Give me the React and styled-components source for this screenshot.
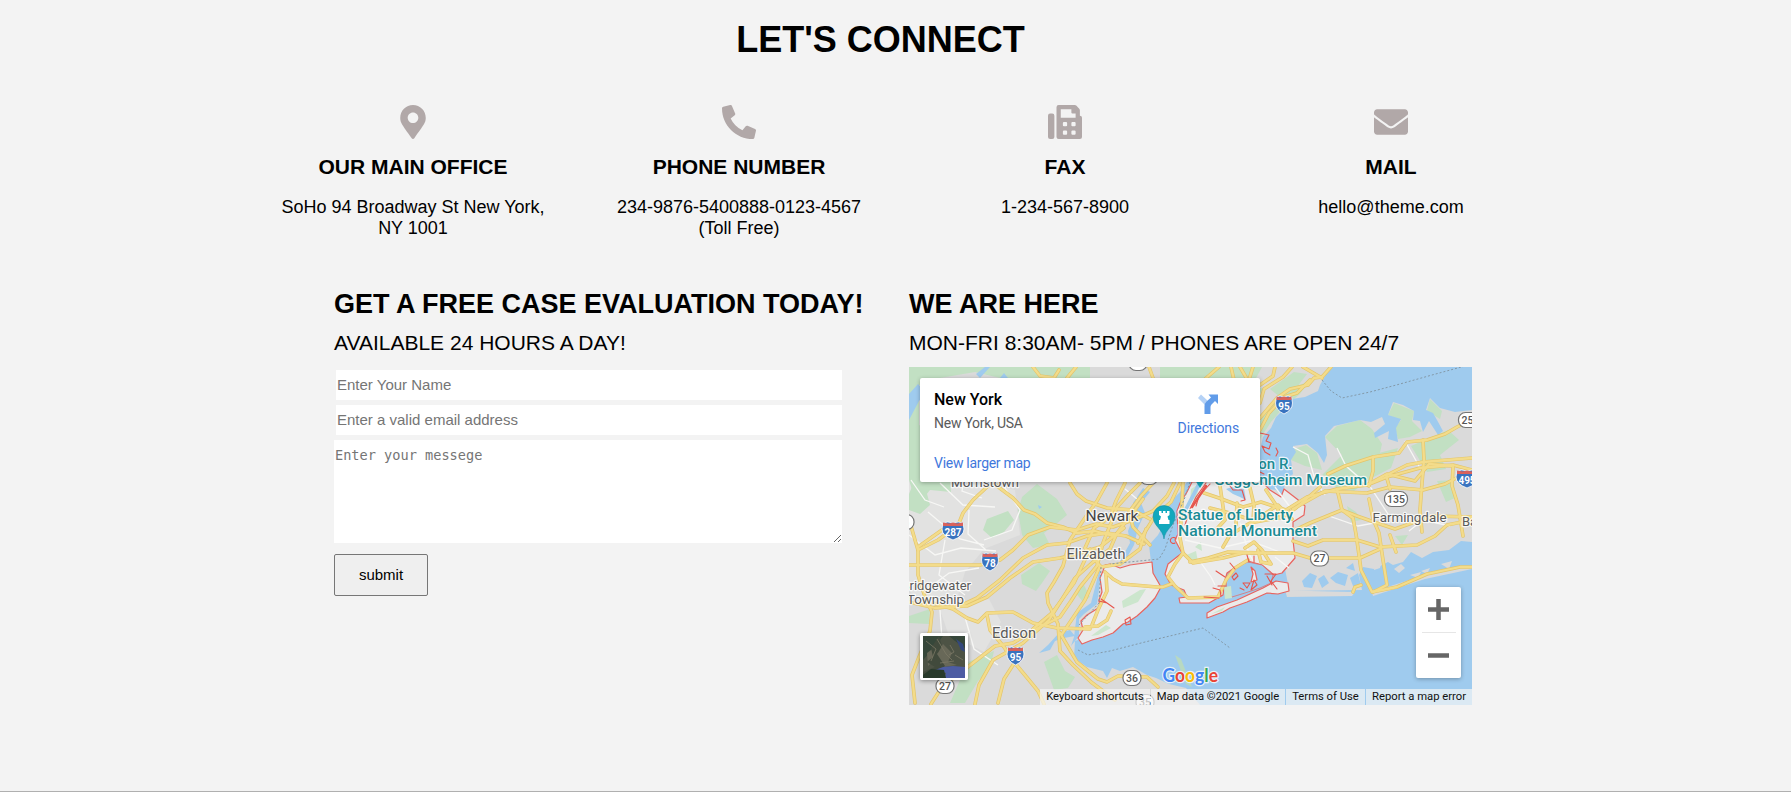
import React from "react";
import styled, { createGlobalStyle } from "styled-components";
import { FaMapMarkerAlt, FaPhoneAlt, FaFax, FaEnvelope } from "react-icons/fa";

const GlobalStyle = createGlobalStyle`
  *, *::before, *::after { box-sizing: border-box; }
  body {
    margin: 0;
    background: #f3f3f3;
    color: #000;
    font-family: "Liberation Sans", Arial, sans-serif;
  }
`;

const Page = styled.main`
  height: 792px;
  overflow: hidden;
  border-bottom: 1px solid #b0b0b0;
`;

const Title = styled.h1`
  width: 1261px;
  margin: 0 0 0 250px;
  padding-top: 19px;
  font-size: 36px;
  line-height: 41px;
  text-align: center;
`;

const Contacts = styled.section`
  display: grid;
  grid-template-columns: repeat(4, 1fr);
  width: 1304px;
  height: 182px;
  margin: 45px 0 0 250px;
`;

const Contact = styled.article`
  display: flex;
  flex-direction: column;
  align-items: center;
  padding: 0 29px;
  text-align: center;

  svg {
    width: 34px;
    height: 34px;
    color: #b1a8a8;
  }
`;

const ContactTitle = styled.h4`
  margin: 16px 0 18px;
  font-size: 21px;
  line-height: 24px;
`;

const ContactText = styled.p`
  margin: 0;
  font-size: 18px;
  line-height: 21px;
`;

const Columns = styled.section`
  display: grid;
  grid-template-columns: 575px 563px;
  padding-left: 334px;
`;

const Heading = styled.h2`
  margin: 2px 0 12px;
  font-size: 27px;
  line-height: 30px;
  white-space: nowrap;
`;

const Subheading = styled.p`
  margin: 0 0 12px;
  font-size: 21px;
  line-height: 24px;
`;

const Form = styled.form`
  display: flex;
  flex-direction: column;
  align-items: flex-start;
  gap: 5px;
  padding-top: 3px;
`;

const Input = styled.input`
  width: 506px;
  height: 30px;
  margin-left: 2px;
  padding: 0 1px 1px;
  border: 0;
  background: #fff;
  font: 15px "Liberation Sans", Arial, sans-serif;
  &::placeholder { color: #757575; }
`;

const Message = styled.textarea`
  display: block;
  width: 508px;
  height: 103px;
  padding: 7px 1px;
  border: 0;
  background: #fff;
  font: 13.6px "DejaVu Sans Mono", monospace;
  &::placeholder { color: #757575; }
`;

const Submit = styled.button`
  width: 94px;
  height: 42px;
  margin-top: 6px;
  padding: 0 0 2px;
  border: 1px solid #767676;
  border-radius: 2px;
  background: #efefef;
  color: #000;
  font: 15px "Liberation Sans", Arial, sans-serif;
`;

const MapFrame = styled.div`
  position: relative;
  width: 563px;
  height: 338px;
  overflow: hidden;
  font-family: Roboto, sans-serif;
`;

const MapCanvas = styled.svg`
  display: block;
  width: 100%;
  height: 100%;
`;

const PlaceCard = styled.div`
  position: absolute;
  top: 11px;
  left: 11px;
  display: flex;
  justify-content: space-between;
  width: 340px;
  height: 104px;
  padding: 12px 21px 0 14px;
  border-radius: 2px;
  background: #fff;
  box-shadow: 0 1px 4px rgba(0, 0, 0, 0.3);
`;

const PlaceName = styled.div`
  font-size: 16px;
  font-weight: 500;
  line-height: 19px;
`;

const PlaceAddress = styled.div`
  margin-top: 6px;
  color: #5b5b5b;
  font-size: 14px;
  letter-spacing: -0.25px;
  line-height: 16px;
`;

const MapLink = styled.a`
  display: block;
  margin-top: ${(p) => p.$top}px;
  color: #3f78dc;
  font-size: 14px;
  letter-spacing: ${(p) => p.$tracking}px;
  line-height: 16px;
`;

const Directions = styled.div`
  display: flex;
  flex-direction: column;
  align-items: center;
  padding-top: 4px;
`;

const ZoomControl = styled.div`
  position: absolute;
  top: 220px;
  right: 11px;
  display: flex;
  flex-direction: column;
  align-items: center;
  width: 45px;
  height: 91px;
  border-radius: 2px;
  background: #fff;
  box-shadow: 0 1px 4px rgba(0, 0, 0, 0.3);
`;

const ZoomButton = styled.button`
  display: flex;
  align-items: center;
  justify-content: center;
  width: 34px;
  height: 45px;
  padding: 0;
  border: 0;
  background: none;
  & + & { border-top: 1px solid #e6e6e6; }
`;

const SatelliteToggle = styled.div`
  position: absolute;
  left: 11px;
  top: 266px;
  width: 48px;
  height: 47px;
  border: 3px solid #fff;
  border-radius: 2px;
  box-shadow: 0 1px 4px rgba(0, 0, 0, 0.4);
  svg { display: block; }
`;

const Attribution = styled.div`
  position: absolute;
  right: 0;
  bottom: 0;
  display: flex;
  height: 16px;
  color: #111;
  font-size: 11.25px;
  line-height: 16px;
`;

const Credit = styled.span`
  width: ${(p) => p.$width}px;
  background: rgba(245, 245, 245, 0.7);
  text-align: center;
  white-space: nowrap;
  & + & { margin-left: 1px; }
`;

const water = [
  "M1328 367L1325 376 1320 385 1318 391 1305 397 1292 399 1285 408 1276 417 1271 428 1263 437 1260 450V488L1276 490 1283 497 1285 482 1293 474 1291 460 1296 452 1293 446 1307 444 1318 453 1324 463 1327 455 1325 436 1334 426 1343 424 1360 420 1371 422 1382 417 1385 424 1374 433 1375 438 1389 431 1388 439 1398 442 1396 428 1401 419 1388 415 1393 402 1403 405 1414 411 1413 420 1420 421 1423 432 1429 421 1438 435 1443 431 1437 420 1433 413 1426 410 1430 398 1440 408 1455 412 1472 410V367Z",
  "M1187 482L1180 492 1172 500 1165 509 1167 518 1158 535 1149 545 1151 562 1149 590 1120 615 1096 634 1075 641 1074 658 1087 667 1103 671 1107 678 1112 668 1120 671 1133 667 1147 675 1156 678 1169 684 1186 688 1200 705H1472V542L1461 541 1449 550 1433 552 1422 558 1411 552 1403 562 1393 565 1388 562 1374 569 1363 567 1359 575 1345 574 1335 580 1325 588 1317 574 1307 577 1302 584 1289 589 1285 569 1260 559 1230 566 1208 590 1190 570 1190 500 1195 482Z",
  "M1143 488L1150 492 1141 503 1145 513 1138 528 1134 545 1125 561 1120 561 1130 543 1128 531 1134 515 1133 503Z",
  "M1100 568L1100 582 1097 604 1084 614 1079 619 1079 636 1071 646 1074 637 1077 613 1091 603Z",
  "M1075 636L1064 638 1055 641 1050 650 1039 653 1048 645 1059 633 1070 630Z",
];

const parks = [
  "M909 367H1090L1090 378 1000 378 975 372 940 378 919 385V430L909 460Z",
  "M1160 367H1262L1255 380H1160Z",
  "M909 430L920 425V472L932 482 950 480 951 492 930 490 922 500 913 493 909 480Z",
  "M914 482L926 490 930 505 920 514 909 510V494Z",
  "M987 519L1008 511 1014 520 1004 532 992 538 983 530Z",
  "M1022 497L1037 484 1057 499 1067 515 1055 525 1044 533 1050 545 1033 548 1022 535 1018 511Z",
  "M1021 575L1039 563 1050 571 1042 583 1036 591 1022 584Z",
  "M909 616L930 609 929 624 909 623Z",
  "M968 662L994 651 990 669 978 681 965 703H950L960 680Z",
  "M1044 662L1057 655 1065 671 1075 677 1068 688 1054 690Z",
  "M1075 592L1084 585 1090 597 1083 602Z",
  "M1260 421L1275 398 1290 388 1308 382 1300 394 1284 407 1271 422 1260 439Z",
  "M1270 389L1294 372 1307 374 1297 387 1280 397Z",
  "M1294 449L1306 445 1317 453 1322 470 1305 466 1291 460Z",
  "M1325 437L1337 426 1360 420 1372 429 1382 444 1379 457 1361 461 1333 478 1322 475 1342 455Z",
  "M1325 477L1360 458 1398 448 1391 468 1370 479 1354 491 1337 488Z",
  "M1388 415L1394 403 1414 411 1412 421 1422 431 1410 437 1398 439 1395 428 1401 420Z",
  "M1430 399L1442 411 1440 419 1427 411Z",
  "M1411 446L1448 430 1459 440 1440 455 1446 469 1427 472Z",
  "M1437 481L1454 480 1455 498 1446 502Z",
  "M1347 506L1356 512 1361 520 1351 522Z",
  "M1395 536L1408 535 1402 545Z",
  "M1356 601L1370 594 1378 596 1359 601Z",
  "M1250 383L1263 389 1256 400Z",
];

const sandyHook = "M1175 655L1181 659 1192 687 1186 684Z";

const urban = [
  "M909 488L945 475 1015 490 1020 535 984 549 965 572 958 595 925 608 909 590Z",
  "M940 610L989 599 1001 622 984 652 948 633Z",
  "M909 480L935 472 955 485 940 506 909 505Z",
];

const boroughs = [
  "M1105 565L1110 564 1120 568 1130 565 1152 562 1153 573 1161 587 1155 598 1147 607 1137 616 1128 622 1123 624 1113 633 1103 637 1092 640 1082 644 1078 638 1083 630 1081 621 1087 615 1100 607 1099 600 1102 592 1100 578 1103 571Z",
  "M1192 482L1187 492 1180 503 1177 511 1178 534 1175 540 1182 553 1168 564 1165 574 1171 585 1184 590 1187 597 1179 598 1180 603 1209 603 1223 595 1225 580 1227 573 1240 564 1248 561 1262 565 1274 575 1282 573 1295 558 1293 540 1293 522 1304 515 1305 506 1297 499 1284 489 1281 497 1270 490 1260 480Z",
  "M1207 618L1207 613 1217 607 1237 600 1250 594 1263 588 1276 581 1288 583 1289 591 1278 594 1267 593 1247 602 1230 608 1223 612Z",
];

const minor =
  "M911 480L925 500 944 507M928 512L960 539 984 545M945 540L939 575 965 595M969 510L968 534 986 550M940 483L963 505 995 507M909 535L935 555 961 548 996 551M965 475L962 491 982 498M1008 473L1005 488 1020 510 1012 530 984 540M926 590L949 573 979 568M940 610L942 640 970 632M965 617L974 649 998 665M1293 447L1308 455 1315 480 1325 495M1337 448L1346 466 1371 488 1388 514M1240 523L1249 554 1254 562M1199 560L1211 577 1215 585M1405 441L1414 457 1420 468M1329 516L1358 526 1390 520M1409 531L1423 520 1450 526M1275 487L1290 507M1185 540L1220 548 1250 541 1280 552M1275 557L1289 568M1125 489L1137 499";

const roads = [
  "M988 486L973 500 963 513 959 523 942 530 918 547 918 575 925 597 932 612 930 631 919 657 912 675 915 703",
  "M909 565H980L1000 560 1013 550 1028 535 1050 527 1077 530 1096 524 1113 527 1133 520 1153 511 1167 496 1174 483",
  "M909 602L935 608 960 606 977 598 1000 580 1023 558 1047 545 1067 543 1087 536 1107 533 1126 536 1144 544",
  "M948 607L967 606 987 597 1010 578 1033 562 1060 558 1080 553 1100 547 1124 528",
  "M909 519L915 540 918 550 938 540 960 524",
  "M993 483L1013 498 1024 510 1035 514 1047 523 1063 527 1077 533 1095 531 1113 536",
  "M1070 483L1077 494 1086 501 1107 508 1133 510 1150 519",
  "M1140 483L1128 495 1117 507 1111 523 1103 543 1097 566 1080 587 1071 601 1060 617 1040 627 1013 643 995 646 973 663 957 675 940 690 931 704",
  "M1107 483L1097 501 1087 515 1070 540 1063 566 1054 582 1047 593 1048 603 1058 624 1060 651 1073 665 1091 682 1115 700",
  "M933 603L953 609 967 618 978 622 987 613 1013 612 1033 623 1057 628 1090 629",
  "M987 615L990 630 1004 647 1014 662 1029 680 1038 691 1044 704",
  "M1015 662L1004 679 998 703",
  "M975 704L979 685 993 660 1023 643 1049 620 1061 601 1075 578 1093 562 1110 549 1117 533 1132 514 1143 499",
  "M1060 633L1077 662 1098 679 1107 682 1118 676 1147 677 1158 687",
  "M1100 566L1085 600 1062 634",
  "M1090 549L1074 583 1052 613 1033 629",
  "M1125 483L1116 501 1110 517 1094 528 1085 548 1101 567 1120 564 1140 549 1146 529",
  "M1153 483L1141 496 1129 512 1133 527 1150 545",
  "M1180 483L1171 502 1155 516 1138 543",
  "M1033 367L1040 376 1054 378 1059 370M1076 367L1067 378M1149 367L1153 378M1219 367L1205 379M1231 367L1234 380M1240 367L1247 379M1253 367L1248 383",
  "M1260 403L1264 389 1283 377 1292 367",
  "M1260 418L1277 398 1290 389 1308 385 1314 378 1322 377 1331 367",
  "M1260 430L1269 413 1284 397 1297 393 1310 380",
  "M1303 367L1322 378",
  "M1260 385L1273 376 1275 367",
  "M1183 553L1193 563 1223 558 1243 553H1293L1310 558H1360L1380 549",
  "M1183 483L1181 520 1180 538 1183 553 1175 564 1168 577 1175 586 1188 598 1218 597 1226 580 1235 568 1248 560",
  "M1223 547L1230 535 1250 523 1283 517 1296 508 1320 487",
  "M1204 493L1219 498 1243 507 1261 502 1286 510 1307 497 1337 489 1367 485 1387 477 1420 468 1453 465 1472 470",
  "M1210 508L1234 514 1254 521 1278 505 1292 519",
  "M1220 486L1225 520 1213 533M1250 488L1254 505 1253 522M1266 490L1276 505 1281 518M1237 503L1236 525",
  "M1245 548L1254 542 1262 550 1271 564 1261 562 1258 550",
  "M1328 474L1345 466 1373 457 1399 453 1407 442 1427 440 1445 434 1457 427 1467 422 1472 420",
  "M1293 509L1325 491 1345 492 1367 493 1390 487 1423 490 1445 484 1460 476 1472 478",
  "M1367 485L1387 474 1415 481 1429 464 1452 466M1387 475L1407 465 1423 462 1472 458",
  "M1373 457L1373 471 1369 486M1423 440L1424 460 1422 483 1420 510 1422 532M1453 467L1452 486 1458 505 1463 536M1386 475L1390 489",
  "M1337 489L1342 510 1353 518 1356 534 1359 555 1361 570 1372 592 1397 587 1427 574 1460 567H1472",
  "M1369 499L1373 519 1379 533 1383 560 1387 585 1373 592M1353 592L1355 587 1361 585",
  "M1293 541L1308 546 1323 540 1357 540 1380 547 1417 545 1435 536 1447 525 1472 520",
  "M1293 531L1310 523 1342 510 1357 516 1374 522 1395 529 1415 522 1433 516 1472 517",
  "M1190 562L1208 558 1228 552 1265 553M1390 535L1396 552",
  "M1105 572L1113 579 1122 584 1157 587 1163 587 1171 584M1085 627L1098 626 1107 620 1111 611M1106 575L1107 591 1098 610 1092 625",
];

const coastDetail =
  "M1206 483L1196 497 1190 509 1185 525M1210 484L1199 496 1196 506M1228 483L1233 490 1242 490 1245 500 1241 501M1260 433L1269 435 1266 441 1271 443 1269 449 1262 446 1265 452 1270 455M1276 448L1278 452 1276 456M1256 470L1264 474M1176 539A3 3 0 1 0 1175 543M1099 601L1107 603 1114 608M1107 603L1101 599M1125 620L1130 617 1131 624 1126 625ZM1216 571L1225 577M1230 563L1235 569M1213 588L1220 590 1221 596M1218 586L1226 586M1247 555L1249 562M1254 556V562M1265 574L1276 574 1271 581 1277 589M1267 576L1272 585M1240 588L1244 590M1243 583L1250 583 1247 588ZM1254 580L1257 585 1251 590ZM1232 577L1236 573 1238 576 1234 580ZM1204 597L1219 598";

const Shield = ({ x, y, children, w = 20 }) => (
  <g transform={`translate(${x} ${y})`}>
    <path d={`M${-w / 2 + 1} -8Q${-w / 4} -10 0 -8Q${w / 4} -10 ${w / 2 - 1} -8L${w / 2} -2Q${w / 2} 5 0 9Q${-w / 2} 5 ${-w / 2} -2Z`} fill="#3973bf" stroke="#fff" strokeWidth=".8" />
    <path d={`M${-w / 2 + 1} -8.5L-4 -7.5 0 -8.5 4 -7.5 ${w / 2 - 1} -8.5L${w / 2 - 1} -5H${-w / 2 + 1}Z`} fill="#d9625c" />
    <text y="5" textAnchor="middle" fontSize="10" fontWeight="700" fill="#fff">{children}</text>
  </g>
);

const RouteBadge = ({ x, y, children, w = 18 }) => (
  <g transform={`translate(${x} ${y})`}>
    <rect x={-w / 2} y="-7.5" width={w} height="15" rx="7" fill="#fff" stroke="#747474" strokeWidth="1.2" />
    <text y="3.8" textAnchor="middle" fontSize="10.5" fontWeight="500" fill="#555">{children}</text>
  </g>
);

const Label = ({ teal, children, ...rest }) => (
  <text
    fill={teal ? "#1a8b94" : "#5a5a5a"}
    stroke="#fff"
    strokeOpacity=".8"
    strokeWidth="2.4"
    strokeLinejoin="round"
    paintOrder="stroke"
    fontWeight={teal ? 500 : 400}
    lengthAdjust="spacingAndGlyphs"
    {...rest}
  >
    {children}
  </text>
);

const MapDrawing = () => (
  <MapCanvas viewBox="909 367 563 338" fontFamily="Roboto, sans-serif">
    <rect x="909" y="367" width="563" height="338" fill="#dadada" />
    {urban.map((d) => <path key={d} d={d} fill="#e2e2e1" />)}
    {parks.map((d) => <path key={d} d={d} fill="#c2e0c3" />)}
    {water.map((d) => <path key={d} d={d} fill="#9fcbee" />)}
    <path d={sandyHook} fill="#b8d9c1" />
    <path d="M909 394L918 384 926 393 919 401 909 420ZM976 374L985 367H990L980 378ZM1000 378L1004 373 1008 378ZM1038 505L1042 507 1039 509Z" fill="#9fcbee" />
    <path d="M1285 590L1310 591 1355 592 1352 596 1287 597ZM1372 592L1425 575 1460 566H1472V569L1425 579 1373 596ZM1375 560L1383 557 1380 568 1374 570ZM1394 569L1401 564 1405 568 1399 573ZM1410 575L1421 572 1418 578ZM1441 564L1452 561 1449 569ZM1421 571L1430 568 1427 574ZM1320 582L1328 576 1333 583 1326 590Z" fill="#dadada" />
    <path d="M1289 570L1325 562 1357 565 1362 590 1289 591Z" fill="#dadada" />
    <path d="M1302 581L1310 573 1317 576 1312 588 1304 587ZM1330 578L1338 572 1348 575 1345 586 1336 583ZM1346 568L1353 563 1355 571ZM1318 579L1324 575 1329 583 1322 588ZM1350 578L1358 573 1361 586 1353 586Z" fill="#9fcbee" />
    <g fill="#ebebeb" stroke="#e8645f" strokeWidth="1.2" strokeLinejoin="round">
      {boroughs.map((d) => <path key={d} d={d} />)}
      <path d="M1227 574L1240 565 1248 562 1262 565 1273 575 1271 583 1260 588 1245 593 1232 597 1226 590Z" fill="#9fcbee" strokeWidth=".7" />
      <path d="M1251 567L1255 571 1257 580 1251 582 1253 574Z" />
    </g>
    <path d="M1191 489L1199 484 1197 496 1190 503ZM1184 556L1196 551 1198 562 1188 559ZM1122 601L1140 590 1146 589 1138 602 1123 608ZM1091 636L1106 625 1111 628 1098 635ZM1224 587L1231 586 1232 598 1225 599ZM1211 614L1225 607 1222 611ZM1195 547L1201 542 1202 551Z" fill="#cce6cd" />
    <path d="M1226 489L1232 487 1244 489 1246 500 1240 497 1233 494ZM1197 484L1202 483 1188 509 1184 519 1183 511Z" fill="#9fcbee" />
    <path d={minor} fill="none" stroke="#f7f7f5" strokeWidth="1.3" />
    <g fill="none" strokeLinejoin="round" strokeLinecap="round">
      {roads.map((d) => <path key={d} d={d} stroke="#e4c56b" strokeWidth="3.6" />)}
      {roads.map((d) => <path key={d} d={d} stroke="#f3dc8b" strokeWidth="2.3" />)}
      <path d={coastDetail} stroke="#e6554d" strokeWidth="1.1" />
      <path d="M1206 486L1192 507M1250 473L1258 478" stroke="#e6554d" strokeWidth="2.4" />
    </g>
    <path d="M1322 380L1331 391 1342 398 1370 392 1400 384 1432 375 1465 366M1078 650L1088 655 1110 651 1145 642 1203 628 1230 648M1190 482L1184 500 1173 525 1165 549 1159 559 1110 564M1101 567L1099 603 1079 625" fill="none" stroke="#8399a8" strokeWidth="1" strokeDasharray="2 2" />

    <RouteBadge x={1138} y={363} w={18} />
    <RouteBadge x={1149} y={477} w={18} />
    <RouteBadge x={906} y={522} w={16}>6</RouteBadge>
    <RouteBadge x={945} y={686}>27</RouteBadge>
    <RouteBadge x={1132} y={678}>36</RouteBadge>
    <RouteBadge x={1145} y={702}>35</RouteBadge>
    <RouteBadge x={1319.5} y={558.5}>27</RouteBadge>
    <RouteBadge x={1396} y={499} w={23}>135</RouteBadge>
    <RouteBadge x={1471} y={420} w={25}>25A</RouteBadge>
    <Shield x={953} y={531} w={22}>287</Shield>
    <Shield x={990} y={562} w={17}>78</Shield>
    <Shield x={1015.5} y={656} w={17}>95</Shield>
    <Shield x={1284} y={405} w={17}>95</Shield>
    <Shield x={1467} y={479} w={22}>495</Shield>

    <Label x="951" y="487" fontSize="13" textLength="68">Morristown</Label>
    <Label x="971" y="590" fontSize="13" textAnchor="end">Bridgewater</Label>
    <Label x="964" y="603.5" fontSize="13" textLength="57" textAnchor="end">Township</Label>
    <Label x="1085.5" y="521" fontSize="15" textLength="53" fill="#444">Newark</Label>
    <Label x="1066.5" y="559" fontSize="14" textLength="59">Elizabeth</Label>
    <Label x="992" y="638" fontSize="15" textLength="44">Edison</Label>
    <Label x="1372.5" y="522" fontSize="13" textLength="74">Farmingdale</Label>
    <Label x="1462" y="526" fontSize="13">Babylon</Label>
    <Label teal x="1292.5" y="469" fontSize="15" textAnchor="end">Solomon R.</Label>
    <Label teal x="1214" y="485" fontSize="15" textLength="153">Guggenheim Museum</Label>
    <path d="M1195 470H1205V480L1200 488 1195 480Z" fill="#12a5b5" />
    <Label teal x="1178" y="520" fontSize="15" textLength="115">Statue of Liberty</Label>
    <Label teal x="1178" y="536" fontSize="15" textLength="139">National Monument</Label>
    <path d="M1164 539C1163 529 1153 526 1153 516.500A11 11 0 0 1 1175 516.500C1175 526 1165 529 1164 539Z" fill="#12a8bd" stroke="#128c9d" strokeWidth=".5" />
    <path d="M1159 511V515L1161 516.500 1160 520H1159V524H1169.500V520H1168.500L1167.500 516.500 1169.500 515V511H1167V513H1165.500V511H1163V513H1161.500V511Z" fill="#fff" />

    <text x="1162.5" y="682" fontFamily="Lato, sans-serif" fontSize="19.5" fontWeight="700" textLength="55.500" lengthAdjust="spacingAndGlyphs" stroke="#e7f1f8" strokeWidth="2.5" paintOrder="stroke">
      <tspan fill="#4285f4">G</tspan><tspan fill="#ea4335">o</tspan><tspan fill="#fbbc05">o</tspan><tspan fill="#4285f4">g</tspan><tspan fill="#34a853">l</tspan><tspan fill="#ea4335">e</tspan>
    </text>
  </MapCanvas>
);

const DirectionsIcon = () => (
  <svg width="22" height="20" viewBox="0 0 22 20">
    <path d="M1 4L4 0.500 10.500 6.500 8 11Z" fill="#b5d2f6" />
    <path d="M7.500 20V12Q7.500 9.500 9.500 7.500L14 3.500 11.500 0.500H21V10L18 7 14.500 10.500Q13.500 11.500 13.500 13V20Z" fill="#619ce9" />
  </svg>
);

const SatelliteThumb = () => (
  <svg width="42" height="42" viewBox="0 0 42 42">
    <rect width="42" height="42" fill="#4d5345" />
    <path d="M0 0H20L10 13 0 24ZM26 0H42V12L32 5Z" fill="#36473a" />
    <path d="M20 8L29 17 25 26 34 29 20 31 11 24ZM4 17L12 11 16 20 5 30Z" fill="#686858" />
    <path d="M16 0L19 10 14 18 22 30 8 42H0V36L12 31 4 26 10 21 8 12Z" fill="#414a3c" />
    <path d="M12 34L20 31 30 30 42 31V42H21L23 37Z" fill="#4c5ca3" />
    <path d="M33 3L40 8 42 16 38 14Z" fill="#34487c" />
    <path d="M0 39L8 33 21 34 23 42H0Z" fill="#283a2b" />
    <path d="M14 3L23 18 29 24M3 5L13 13 8 25M27 9L31 16 26 19M17 27L31 25M32 19L40 24" fill="none" stroke="#7b7865" strokeWidth=".8" />
  </svg>
);

const contacts = [
  { icon: FaMapMarkerAlt, title: "OUR MAIN OFFICE", text: "SoHo 94 Broadway St New York, NY 1001" },
  { icon: FaPhoneAlt, title: "PHONE NUMBER", text: "234-9876-5400888-0123-4567 (Toll Free)" },
  { icon: FaFax, title: "FAX", text: "1-234-567-8900" },
  { icon: FaEnvelope, title: "MAIL", text: "hello@theme.com" },
];

export default function App() {
  return (
    <Page>
      <GlobalStyle />
      <Title>LET'S CONNECT</Title>
      <Contacts>
        {contacts.map(({ icon: Icon, title, text }) => (
          <Contact key={title}>
            <Icon />
            <ContactTitle>{title}</ContactTitle>
            <ContactText>{text}</ContactText>
          </Contact>
        ))}
      </Contacts>
      <Columns>
        <div>
          <Heading>GET A FREE CASE EVALUATION TODAY!</Heading>
          <Subheading>AVAILABLE 24 HOURS A DAY!</Subheading>
          <Form>
            <Input placeholder="Enter Your Name" />
            <Input placeholder="Enter a valid email address" />
            <Message placeholder="Enter your messege" />
            <Submit type="button">submit</Submit>
          </Form>
        </div>
        <div>
          <Heading>WE ARE HERE</Heading>
          <Subheading>MON-FRI 8:30AM- 5PM / PHONES ARE OPEN 24/7</Subheading>
          <MapFrame>
            <MapDrawing />
            <PlaceCard>
              <div>
                <PlaceName>New York</PlaceName>
                <PlaceAddress>New York, USA</PlaceAddress>
                <MapLink $top={24} $tracking={-0.28}>View larger map</MapLink>
              </div>
              <Directions>
                <DirectionsIcon />
                <MapLink $top={6} $tracking={-0.15}>Directions</MapLink>
              </Directions>
            </PlaceCard>
            <SatelliteToggle>
              <SatelliteThumb />
            </SatelliteToggle>
            <ZoomControl>
              <ZoomButton aria-label="Zoom in">
                <svg width="21" height="21" viewBox="0 0 21 21"><path d="M0 10.500H21M10.500 0V21" stroke="#666" strokeWidth="4.500" /></svg>
              </ZoomButton>
              <ZoomButton aria-label="Zoom out">
                <svg width="21" height="5" viewBox="0 0 21 5"><path d="M0 2.500H21" stroke="#666" strokeWidth="4.500" /></svg>
              </ZoomButton>
            </ZoomControl>
            <Attribution>
              <Credit $width={110}>Keyboard shortcuts</Credit>
              <Credit $width={134}>Map data ©2021 Google</Credit>
              <Credit $width={79}>Terms of Use</Credit>
              <Credit $width={106}>Report a map error</Credit>
            </Attribution>
          </MapFrame>
        </div>
      </Columns>
    </Page>
  );
}
